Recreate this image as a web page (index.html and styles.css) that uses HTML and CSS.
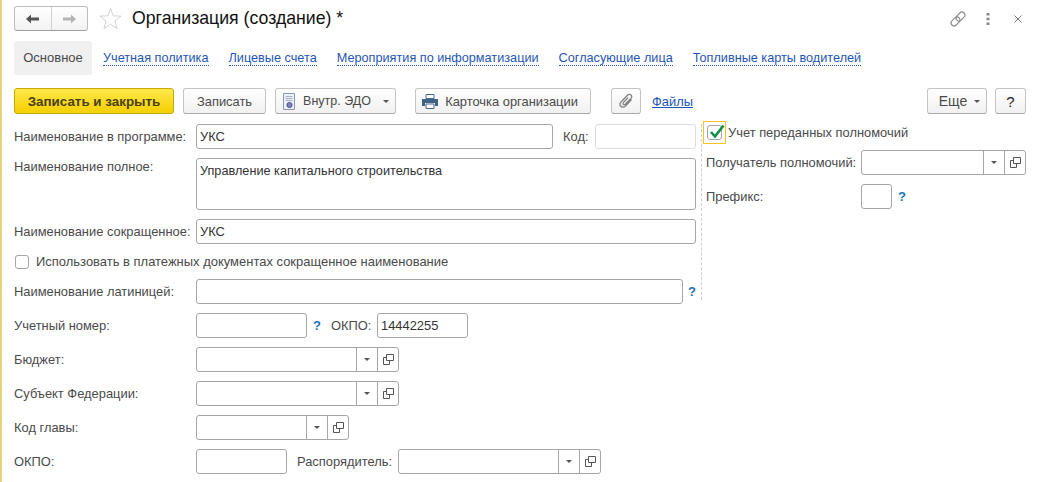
FILE: index.html
```html
<!DOCTYPE html>
<html lang="ru">
<head>
  <meta charset="UTF-8" />
  <title>Организация (создание)</title>
  <link rel="stylesheet" href="styles.css">
</head>
<body>

  <header class="title-bar">
    <div class="nav-group">
      <button class="nav-btn">
        <svg width="16" height="12" viewBox="0 0 16 12"><path d="M1 6 L6 1.5 V4.5 H14 V7.5 H6 V10.5 Z" fill="#555"/></svg>
      </button>
      <button class="nav-btn">
        <svg width="16" height="12" viewBox="0 0 16 12"><path d="M15 6 L10 1.5 V4.5 H2 V7.5 H10 V10.5 Z" fill="#b4b4b4"/></svg>
      </button>
    </div>
    <svg class="star" width="23" height="23" viewBox="0 0 24 24"><path d="M12 1.5 L14.8 9.2 L23 9.5 L16.6 14.6 L18.8 22.5 L12 18 L5.2 22.5 L7.4 14.6 L1 9.5 L9.2 9.2 Z" fill="none" stroke="#cfcfcf"/></svg>
    <h1>Организация (создание) *</h1>
    <div class="window-icons">
      <svg class="link-ico" width="18" height="18" viewBox="0 0 18 18"><g transform="rotate(-45 9 9)" fill="none" stroke="#8a8a8a" stroke-width="1.1"><rect x="0.5" y="6" width="10" height="6" rx="3"/><rect x="7.5" y="6" width="10" height="6" rx="3"/></g></svg>
      <svg width="4" height="12" viewBox="0 0 4 12"><path d="M0.5 0h3v2.5h-3zM0.5 4.7h3v2.5h-3zM0.5 9.4h3v2.5h-3z" fill="#888"/></svg>
      <svg class="close-ico" width="10" height="10" viewBox="0 0 10 10"><path d="M1.5 1.5 L8.5 8.5 M8.5 1.5 L1.5 8.5" stroke="#777" stroke-width="1"/></svg>
    </div>
  </header>

  <nav class="tabs">
    <span class="tab active">Основное</span>
    <a class="tab">Учетная политика</a>
    <a class="tab">Лицевые счета</a>
    <a class="tab">Мероприятия по информатизации</a>
    <a class="tab">Согласующие лица</a>
    <a class="tab">Топливные карты водителей</a>
  </nav>

  <div class="toolbar">
    <button class="btn primary">Записать и закрыть</button>
    <button class="btn save">Записать</button>
    <button class="btn edo">
      <svg width="14" height="17" viewBox="0 0 14 17"><path d="M1.5 .5 H12.5 V16.5 H1.5 Z" fill="#eef1f7" stroke="#8d9ab5"/><path d="M3.5 3.5h7M3.5 5.5h7M3.5 7.5h7" stroke="#a7b1c6"/><circle cx="7.5" cy="12" r="2.6" fill="#7f7fc4" stroke="#54548f"/></svg>
      Внутр. ЭДО <i class="caret"></i>
    </button>
    <button class="btn card">
      <svg width="16" height="15" viewBox="0 0 16 15"><path d="M4 .5h8v4H4z" fill="#fff" stroke="#4a6a8a"/><path d="M0 5h16v7h-3V9H3v3H0z" fill="#3f6485"/><path d="M4 10h8v4.5H4z" fill="#fff" stroke="#4a6a8a"/></svg>
      Карточка организации
    </button>
    <button class="btn clip">
      <svg width="16" height="16" viewBox="0 0 16 16"><path d="M13.5 6.5 L7.5 13 C5.5 15 2.5 14 2 12 C1.7 10.8 2.2 9.7 3 9 L9.5 2.3 C10.8 1 12.8 1.3 13.5 2.5 C14.1 3.6 13.8 4.6 13 5.4 L7.3 11.2 C6.5 12 5.2 11.7 5 10.8 C4.9 10.2 5.1 9.8 5.5 9.4 L10 4.7" fill="none" stroke="#808080" stroke-width="1.3"/></svg>
    </button>
    <a class="files">Файлы</a>
    <button class="btn more">Еще <i class="caret"></i></button>
    <button class="btn help">?</button>
  </div>

  <main class="form">
    <section class="col-left">
      <div class="row">
        <label class="lbl">Наименование в программе:</label>
        <div class="field w-name">УКС</div>
        <label class="lbl-code">Код:</label>
        <div class="field w-code disabled"></div>
      </div>
      <div class="row row-memo">
        <label class="lbl">Наименование полное:</label>
        <div class="field memo">Управление капитального строительства</div>
      </div>
      <div class="row">
        <label class="lbl">Наименование сокращенное:</label>
        <div class="field w-full">УКС</div>
      </div>
      <div class="row row-check">
        <span class="check"></span>
        <span>Использовать в платежных документах сокращенное наименование</span>
      </div>
      <div class="row">
        <label class="lbl">Наименование латиницей:</label>
        <div class="field w-latin"></div>
        <span class="hint hint-latin">?</span>
      </div>
      <div class="row">
        <label class="lbl">Учетный номер:</label>
        <div class="field w-acc"></div>
        <span class="hint hint-acc">?</span>
        <label class="lbl-okpo">ОКПО:</label>
        <div class="field w-okpo">14442255</div>
      </div>
      <div class="row">
        <label class="lbl">Бюджет:</label>
        <div class="select w-select"><span class="sel-main"></span><span class="sel-btn"><i class="caret"></i></span><span class="sel-btn"><svg class="open-ico" width="11" height="11" viewBox="0 0 11 11"><path d="M3.5 .5h7v6h-7zM3.5 3.5H.5v7h6V7" fill="none" stroke="#555"/></svg></span></div>
      </div>
      <div class="row">
        <label class="lbl">Субъект Федерации:</label>
        <div class="select w-select"><span class="sel-main"></span><span class="sel-btn"><i class="caret"></i></span><span class="sel-btn"><svg class="open-ico" width="11" height="11" viewBox="0 0 11 11"><path d="M3.5 .5h7v6h-7zM3.5 3.5H.5v7h6V7" fill="none" stroke="#555"/></svg></span></div>
      </div>
      <div class="row">
        <label class="lbl">Код главы:</label>
        <div class="select w-select-sm"><span class="sel-main"></span><span class="sel-btn"><i class="caret"></i></span><span class="sel-btn"><svg class="open-ico" width="11" height="11" viewBox="0 0 11 11"><path d="M3.5 .5h7v6h-7zM3.5 3.5H.5v7h6V7" fill="none" stroke="#555"/></svg></span></div>
      </div>
      <div class="row">
        <label class="lbl">ОКПО:</label>
        <div class="field w-okpo2"></div>
        <label class="lbl-disp">Распорядитель:</label>
        <div class="select w-select-disp"><span class="sel-main"></span><span class="sel-btn"><i class="caret"></i></span><span class="sel-btn"><svg class="open-ico" width="11" height="11" viewBox="0 0 11 11"><path d="M3.5 .5h7v6h-7zM3.5 3.5H.5v7h6V7" fill="none" stroke="#555"/></svg></span></div>
      </div>
    </section>

    <section class="col-right">
      <div class="row row-top">
        <span class="focus-box"><span class="check checked"><svg width="18" height="16" viewBox="0 0 18 16"><path d="M3 8 L7 12.5 L15.5 1.5" fill="none" stroke="#0c8f4a" stroke-width="2.6"/></svg></span></span>
        <span>Учет переданных полномочий</span>
      </div>
      <div class="row">
        <label class="lbl-right">Получатель полномочий:</label>
        <div class="select w-select-right"><span class="sel-main"></span><span class="sel-btn"><i class="caret"></i></span><span class="sel-btn"><svg class="open-ico" width="11" height="11" viewBox="0 0 11 11"><path d="M3.5 .5h7v6h-7zM3.5 3.5H.5v7h6V7" fill="none" stroke="#555"/></svg></span></div>
      </div>
      <div class="row">
        <label class="lbl-right">Префикс:</label>
        <div class="field w-prefix"></div>
        <span class="hint hint-prefix">?</span>
      </div>
    </section>
  </main>

</body>
</html>
```

FILE: styles.css
```css
* {
  box-sizing: border-box;
  margin: 0;
  padding: 0;
}

html, body {
  height: 100%;
  overflow: hidden;
}

body {
  font-family: "Liberation Sans", Arial, sans-serif;
  font-size: 12.9px;
  color: #4a4a4a;
  background: #fff;
  border-left: 2px solid #e4d27a;
  padding-left: 12px;
}

button {
  font: inherit;
  color: inherit;
}

/* title */
.title-bar {
  display: flex;
  align-items: center;
  height: 36px;
  padding-top: 1px;
}

.nav-group {
  display: flex;
  width: 74px;
  height: 25px;
  border: 1px solid #bdbdbd;
  border-bottom-color: #9f9f9f;
  border-radius: 3px;
  background: linear-gradient(#fff, #f2f2f2);
}

.nav-btn {
  flex: 1;
  border: none;
  background: none;
  display: flex;
  align-items: center;
  justify-content: center;
}

.nav-btn + .nav-btn {
  border-left: 1px solid #d0d0d0;
}

.star {
  margin-left: 11px;
}

h1 {
  font-size: 17.7px;
  font-weight: 400;
  color: #111;
  margin-left: 10px;
}

.window-icons {
  margin-left: auto;
  display: flex;
  align-items: center;
  gap: 19px;
  margin-right: 20px;
}

.close-ico {
  margin-left: 4px;
}

/* tabs */
.tabs {
  display: flex;
  height: 34px;
  margin-top: 5px;
  gap: 20px;
  align-items: center;
}

.tab {
  color: #1f56b5;
  font-size: 12.7px;
  border-bottom: 1px dotted #1f56b5;
  line-height: 14px;
}

.tab.active {
  width: 78px;
  height: 34px;
  font-size: 13px;
  line-height: 34px;
  text-align: center;
  background: #f0f0f0;
  border: none;
  border-radius: 3px;
  color: #4a4a4a;
  margin-right: -9px;
}

/* toolbar */
.toolbar {
  display: flex;
  align-items: center;
  margin-top: 13px;
  height: 26px;
}

.btn {
  height: 26px;
  border: 1px solid #c4c4c4;
  border-bottom-color: #a8a8a8;
  border-radius: 3px;
  background: linear-gradient(#fff, #f1f1f1);
  display: flex;
  align-items: center;
  justify-content: center;
  gap: 7px;
  flex: none;
}

.primary {
  width: 160px;
  font-weight: 700;
  font-size: 13.4px;
  color: #4a3f10;
  border-color: #c9a800;
  background: linear-gradient(#ffe94d, #f5cf00);
}

.save { width: 83px; margin-left: 9px; }
.edo { width: 121px; margin-left: 9px; font-size: 12.5px; }
.edo .caret { margin-left: 5px; }
.card { width: 176px; margin-left: 19px; padding-right: 6px; }
.clip { width: 30px; margin-left: 20px; }
.more { width: 60px; margin-left: auto; padding-left: 5px; font-size: 14px; }
.help { width: 31px; margin-left: 8px; margin-right: 17px; font-size: 15px; color: #222; }

.files {
  margin-left: 11px;
  color: #1f56b5;
  text-decoration: underline;
}

.caret {
  display: inline-block;
  border-left: 3px solid transparent;
  border-right: 3px solid transparent;
  border-top: 3px solid #555;
}

/* form */
.form {
  display: flex;
  margin-top: 10px;
}

.col-left {
  width: 687px;
  flex: none;
  display: flex;
  flex-direction: column;
  gap: 9px;
}

.col-right {
  width: 325px;
  flex: none;
  height: 176px;
  border-left: 1px dashed #cfcfcf;
  padding-left: 4px;
  display: flex;
  flex-direction: column;
  gap: 9px;
}

.row {
  display: flex;
  align-items: center;
  height: 25px;
  flex: none;
}

.lbl {
  width: 182px;
  flex: none;
  white-space: nowrap;
}

.row-memo {
  height: 52px;
  align-items: flex-start;
}

.row-memo .lbl {
  padding-top: 1px;
}

.row-check {
  height: 17px;
  gap: 7px;
  padding-left: 1px;
  font-size: 12.97px;
}

.field {
  height: 25px;
  border: 1px solid #a6a6a6;
  border-radius: 3px;
  padding-left: 3px;
  line-height: 23px;
  color: #333;
  flex: none;
  background: #fff;
}

.field.disabled {
  border-color: #dcdcdc;
}

.memo {
  width: 500px;
  height: 52px;
  font-size: 12.7px;
  line-height: 24px;
}

.w-name { width: 357px; }
.w-code { width: 101px; }
.w-full { width: 500px; }
.w-latin { width: 487px; }
.w-acc { width: 111px; }
.w-okpo { width: 91px; }
.w-okpo2 { width: 91px; }
.w-prefix { width: 31px; }

.lbl-code { margin-left: 10px; width: 32px; }
.lbl-okpo { width: 46px; }
.lbl-disp { margin-left: 10px; width: 101px; }
.lbl-right { width: 155px; flex: none; white-space: nowrap; }

.hint {
  color: #1a74b8;
  font-weight: 700;
  font-size: 13px;
}

.hint-latin { margin-left: 5px; }
.hint-acc { margin-left: 6px; width: 18px; }
.hint-prefix { margin-left: 6px; }

.select {
  display: flex;
  height: 25px;
  border: 1px solid #a6a6a6;
  border-radius: 3px;
  flex: none;
}

.sel-main { flex: 1; }

.sel-btn {
  width: 21px;
  flex: none;
  border-left: 1px solid #a6a6a6;
  display: flex;
  align-items: center;
  justify-content: center;
}

.w-select { width: 203px; }
.w-select-sm { width: 153px; }
.w-select-disp { width: 203px; }
.w-select-right { width: 165px; }

.check {
  width: 14px;
  height: 14px;
  border: 1px solid #a6a6a6;
  border-radius: 3px;
  flex: none;
  position: relative;
}

.row-top {
  gap: 2px;
  height: 17px;
}

.focus-box {
  width: 23px;
  height: 23px;
  margin-left: -3px;
  border: 1px solid #f3c623;
  display: flex;
  align-items: center;
  justify-content: center;
  flex: none;
}

.check.checked {
  width: 15px;
  height: 15px;
}

.check.checked svg {
  position: absolute;
  left: 0;
  top: -2px;
}
```
